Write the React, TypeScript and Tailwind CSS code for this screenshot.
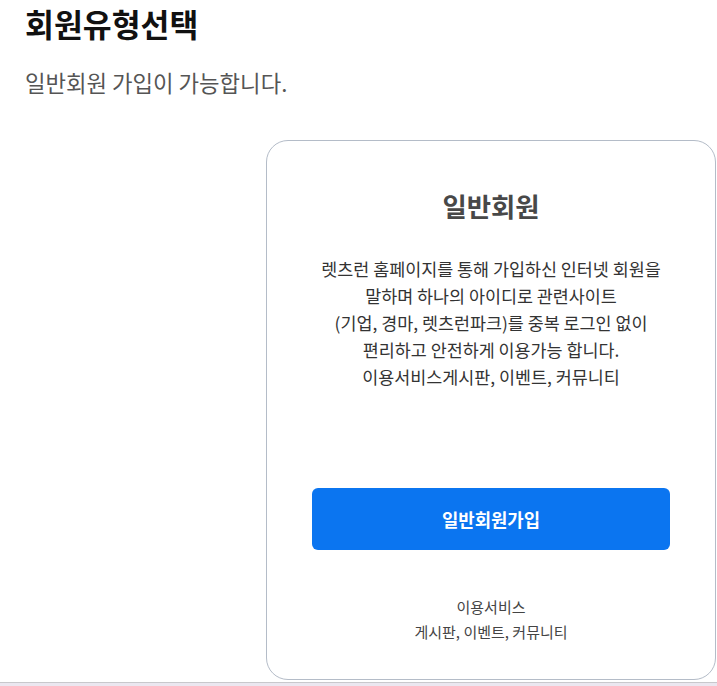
const font = { fontFamily: '"Noto Sans CJK KR", "Noto Sans", sans-serif' };

function MemberCard() {
  return (
    <div className="w-[450px] h-[540px] rounded-[22px] border border-[#b4bcc8] bg-white px-[45px] pt-[47px] flex flex-col items-center text-center">
      <h2 className="text-[26.4px] leading-[36px] font-bold text-[#484848]">일반회원</h2>
      <p className="mt-[31px] text-[17.4px] leading-[27px] text-[#333] whitespace-nowrap">
        렛츠런 홈페이지를 통해 가입하신 인터넷 회원을
        <br />
        말하며 하나의 아이디로 관련사이트
        <br />
        (기업, 경마, 렛츠런파크)를 중복 로그인 없이
        <br />
        편리하고 안전하게 이용가능 합니다.
        <br />
        이용서비스게시판, 이벤트, 커뮤니티
      </p>
      <button
        type="button"
        className="mt-[98px] w-full h-[62px] rounded-[6px] bg-[#0b75f0] text-white text-[17.8px] font-bold"
      >
        일반회원가입
      </button>
      <p className="mt-[44px] text-[15px] leading-[25px] text-[#444]">
        이용서비스
        <br />
        게시판, 이벤트, 커뮤니티
      </p>
    </div>
  );
}

export default function App() {
  return (
    <div style={font} className="w-full h-[686px] bg-white flex flex-col">
      <div className="h-[682px] px-[25px] pt-[3px]">
        <h1 className="text-[31.4px] leading-[42px] font-bold text-[#111]">회원유형선택</h1>
        <p className="mt-[22px] text-[22.3px] leading-[30px] text-[#555]">일반회원 가입이 가능합니다.</p>
        <div className="mt-[43px] pl-[241px]">
          <MemberCard />
        </div>
      </div>
      <div className="flex-1 border-t border-[#c8c8cc] bg-[#ebe7f0]" />
    </div>
  );
}
